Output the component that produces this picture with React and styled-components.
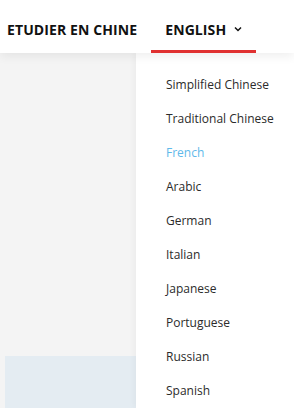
import React from "react";
import styled, { createGlobalStyle } from "styled-components";

const Global = createGlobalStyle`
  html, body { margin: 0; padding: 0; overflow: hidden; }
  body { font-family: "Open Sans", "Liberation Sans", sans-serif; background: #f4f4f4; width: 294px; height: 408px; }
`;

const Page = styled.div`
  position: relative;
  width: 294px;
  height: 408px;
  overflow: hidden;
  background: #f4f4f4;
`;

const Header = styled.header`
  position: relative;
  z-index: 2;
  height: 53px;
  background: #fff;
  display: flex;
  align-items: stretch;
  padding-left: 7px;
  box-shadow: 0 3px 10px rgba(0, 0, 0, 0.07);
`;

const NavItem = styled.div`
  display: flex;
  align-items: center;
  gap: 8px;
  padding: ${(p) => (p.$first ? "8px 14px 0 0" : "8px 14px 0")};
  font-weight: 700;
  font-size: 14px;
  letter-spacing: 0.1px;
  color: #111;
  text-transform: uppercase;
  box-sizing: border-box;
  border-bottom: 3px solid ${(p) => (p.$active ? "#e03131" : "transparent")};
`;

const Main = styled.main`
  padding: 303px 0 0 5px;
`;

const Card = styled.div`
  width: 140px;
  height: 60px;
  background: #e4ecf2;
`;

const Dropdown = styled.ul`
  position: absolute;
  z-index: 1;
  top: 53px;
  left: 136px;
  right: 0;
  bottom: 0;
  margin: 0;
  padding: 15px 0 0 30px;
  list-style: none;
  background: #fff;
  box-shadow: -2px 0 6px rgba(0, 0, 0, 0.04);
`;

const Option = styled.li`
  height: 34px;
  line-height: 34px;
  font-size: 12px;
  color: ${(p) => (p.$selected ? "#5fb9ea" : "#2b2b2b")};
  white-space: nowrap;
`;

const languages = [
  "Simplified Chinese",
  "Traditional Chinese",
  "French",
  "Arabic",
  "German",
  "Italian",
  "Japanese",
  "Portuguese",
  "Russian",
  "Spanish",
];

const Chevron = () => (
  <svg width="8" height="6" viewBox="0 0 8 6" fill="none">
    <path d="M1 1.5l3 3 3-3" stroke="#111" strokeWidth="1.5" />
  </svg>
);

export default function App() {
  return (
    <Page>
      <Global />
      <Header>
        <NavItem $first>Etudier en Chine</NavItem>
        <NavItem $active>
          English
          <Chevron />
        </NavItem>
      </Header>
      <Main>
        <Card />
      </Main>
      <Dropdown>
        {languages.map((l) => (
          <Option key={l} $selected={l === "French"}>
            {l}
          </Option>
        ))}
      </Dropdown>
    </Page>
  );
}
